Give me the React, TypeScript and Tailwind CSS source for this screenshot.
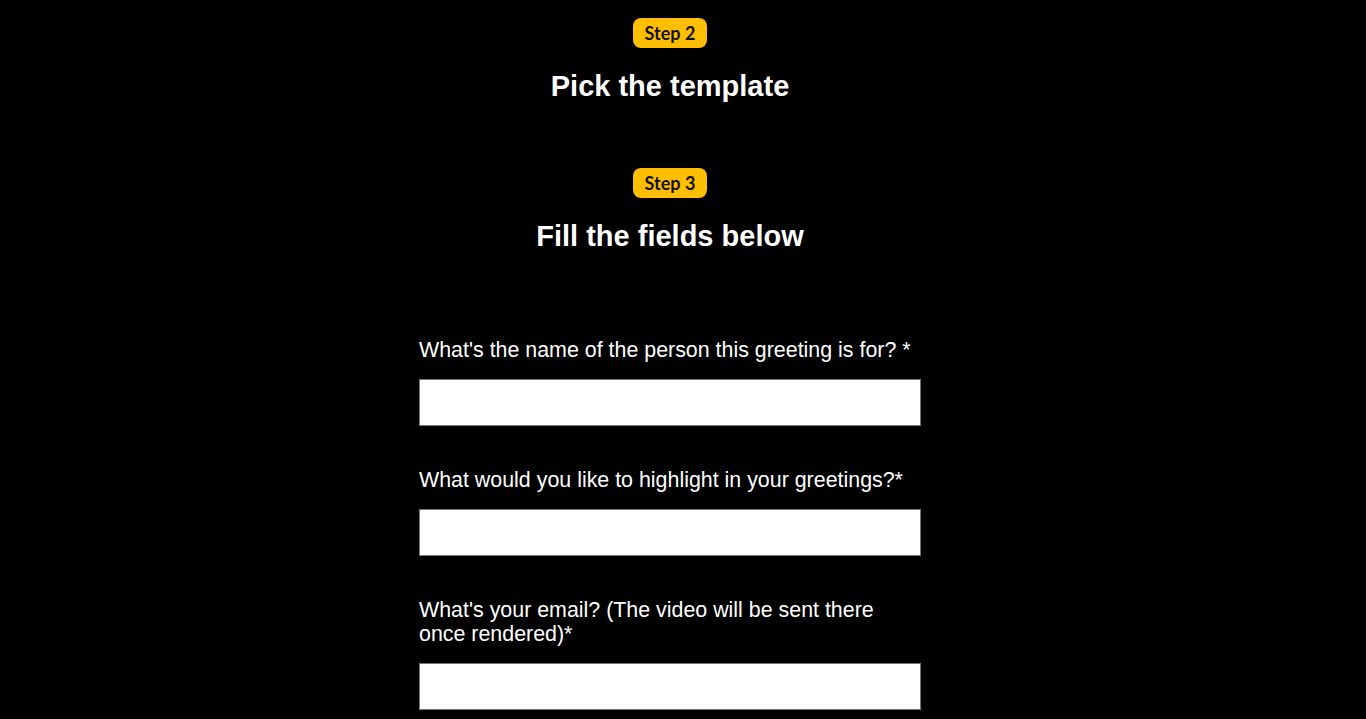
import React from "react";

function Badge({ text }: { text: string }) {
  return (
    <div className="h-[30px] w-[74px] rounded-[8px] bg-[#ffbf00] flex items-center justify-center text-[18px] font-bold text-[#111] [font-family:Lato,'Open_Sans',sans-serif]">
      {text}
    </div>
  );
}

function Field({ label }: { label: string }) {
  return (
    <div className="flex flex-col">
      <label className="text-[21.4px] leading-[24px] text-white">{label}</label>
      <input className="mt-[17px] h-[47px] w-[502px] bg-white border border-[#767676]" />
    </div>
  );
}

export default function App() {
  return (
    <div className="min-h-[719px] w-full bg-black [font-family:'Liberation_Sans',Arial,sans-serif] flex flex-col items-center pt-[18px] pr-[26px]">
      <Badge text="Step 2" />
      <h2 className="mt-[22px] text-[29px] leading-[32px] font-bold text-white">Pick the template</h2>
      <div className="mt-[66px]">
        <Badge text="Step 3" />
      </div>
      <h2 className="mt-[22px] text-[29px] leading-[32px] font-bold text-white">Fill the fields below</h2>
      <div className="mt-[86px] flex flex-col gap-[42px] w-[502px]">
        <Field label="What's the name of the person this greeting is for? *" />
        <Field label="What would you like to highlight in your greetings?*" />
        <Field label="What's your email? (The video will be sent there once rendered)*" />
      </div>
    </div>
  );
}
